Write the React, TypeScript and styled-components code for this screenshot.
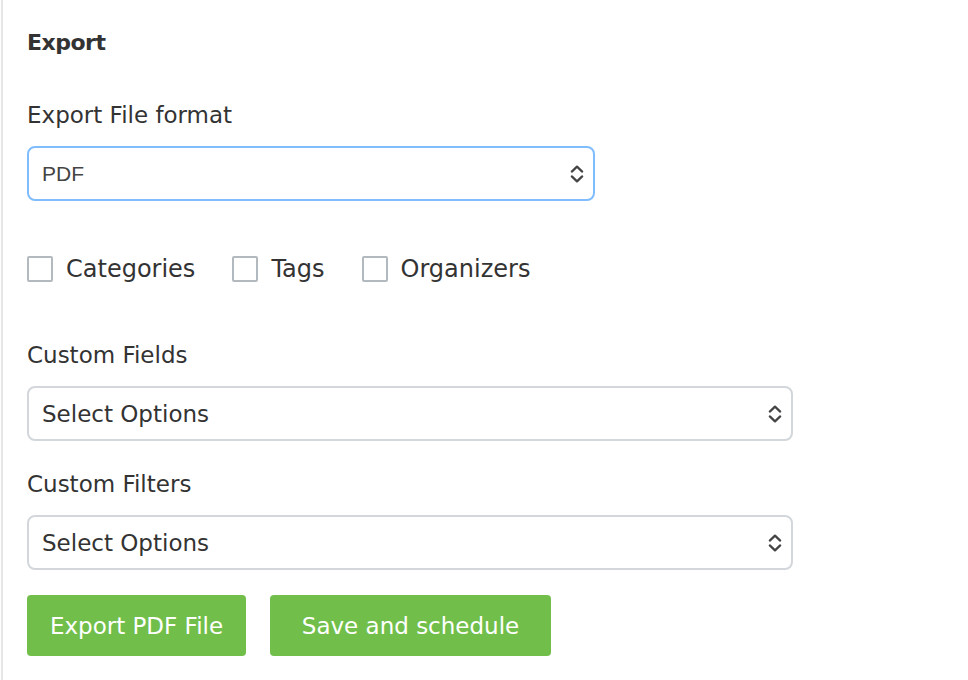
import React from "react";
import styled, { createGlobalStyle } from "styled-components";

const GlobalStyle = createGlobalStyle`
  html, body {
    margin: 0;
    padding: 0;
    background: #ffffff;
  }
  body {
    font-family: "DejaVu Sans", "Liberation Sans", sans-serif;
    color: #333333;
  }
`;

// Styles
const Panel = styled.section`
  margin-left: 1px;
  min-height: 680px;
  box-sizing: border-box;
  border-left: 2px solid #e6e6e6;
  padding: 31px 0 0 24px;
`;

const Title = styled.h2`
  margin: 0;
  font-size: 22px;
  line-height: 24px;
  font-weight: bold;
  letter-spacing: -0.5px;
  color: #333333;
`;

const Label = styled.div<{ $top: number }>`
  margin-top: ${(p) => p.$top}px;
  font-size: 23px;
  line-height: 28px;
  color: #333333;
`;

const SelectBox = styled.div<{ $width: number; $focused?: boolean }>`
  box-sizing: border-box;
  margin-top: 17px;
  width: ${(p) => p.$width}px;
  height: 55px;
  display: flex;
  align-items: center;
  justify-content: space-between;
  padding: 0 9px 0 13px;
  border: 2px solid ${(p) => (p.$focused ? "#80bdff" : "#d3d7db")};
  border-radius: 8px;
  background: #ffffff;
  cursor: pointer;
`;

const SelectText = styled.span<{ $native?: boolean }>`
  font-family: ${(p) =>
    p.$native ? `"Liberation Sans", Arial, sans-serif` : `"DejaVu Sans", sans-serif`};
  font-size: ${(p) => (p.$native ? 21 : 23)}px;
  color: ${(p) => (p.$native ? "#444444" : "#333333")};
`;

const CheckRow = styled.div`
  margin-top: 54px;
  display: flex;
  align-items: center;
  height: 28px;
`;

const CheckItem = styled.label`
  display: flex;
  align-items: center;
  gap: 13px;
  margin-right: 37px;
  font-size: 24px;
  line-height: 28px;
  color: #333333;
  cursor: pointer;
`;

const Box = styled.span`
  box-sizing: border-box;
  width: 26px;
  height: 26px;
  border: 2px solid #b3babf;
  border-radius: 2px;
  background: #ffffff;
`;

const Actions = styled.div`
  margin-top: 25px;
  display: flex;
  gap: 24px;
`;

const GreenButton = styled.button<{ $width: number }>`
  width: ${(p) => p.$width}px;
  height: 61px;
  padding: 0;
  border: none;
  border-radius: 4px;
  background: #71bf4a;
  color: #ffffff;
  font-family: "DejaVu Sans", sans-serif;
  font-size: 23px;
  cursor: pointer;
`;

const Chevrons = () => (
  <svg width="14" height="20" viewBox="0 0 14 20" fill="none">
    <path
      d="M1.8 7.6 L7 2.6 L12.2 7.6"
      stroke="#444"
      strokeWidth="2.2"
      strokeLinecap="round"
      strokeLinejoin="round"
    />
    <path
      d="M1.8 12.4 L7 17.4 L12.2 12.4"
      stroke="#444"
      strokeWidth="2.2"
      strokeLinecap="round"
      strokeLinejoin="round"
    />
  </svg>
);

interface SelectProps {
  value: string;
  width: number;
  focused?: boolean;
  native?: boolean;
}

const Select = ({ value, width, focused, native }: SelectProps) => (
  <SelectBox $width={width} $focused={focused}>
    <SelectText $native={native}>{value}</SelectText>
    <Chevrons />
  </SelectBox>
);

const options = ["Categories", "Tags", "Organizers"];

export default function App() {
  return (
    <>
      <GlobalStyle />
      <Panel>
        <Title>Export</Title>
        <Label $top={46}>Export File format</Label>
        <Select value="PDF" width={568} focused native />

        <CheckRow>
          {options.map((o) => (
            <CheckItem key={o}>
              <Box />
              {o}
            </CheckItem>
          ))}
        </CheckRow>

        <Label $top={58}>Custom Fields</Label>
        <Select value="Select Options" width={766} />

        <Label $top={29}>Custom Filters</Label>
        <Select value="Select Options" width={766} />

        <Actions>
          <GreenButton $width={219}>Export PDF File</GreenButton>
          <GreenButton $width={281}>Save and schedule</GreenButton>
        </Actions>
      </Panel>
    </>
  );
}
